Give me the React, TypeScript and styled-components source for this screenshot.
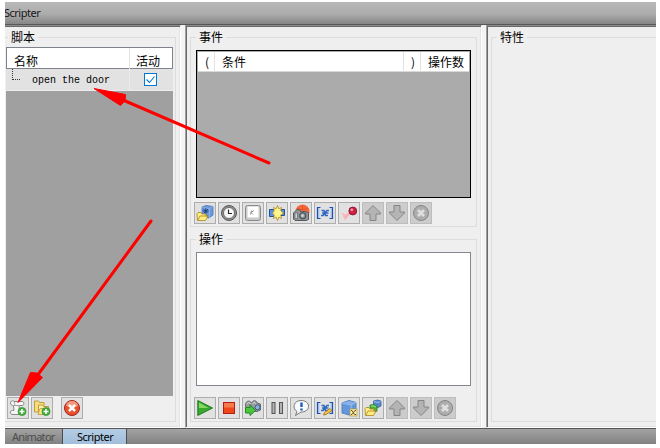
import React from "react";
import styled, { createGlobalStyle } from "styled-components";

const Global = createGlobalStyle`
  * { box-sizing: border-box; }
  body { margin: 0; background: #fff; }
`;

const Page = styled.div`
  position: relative;
  width: 660px;
  height: 448px;
  padding: 2px 4px 4px 5px;
  overflow: hidden;
  color: #000;
  font: 12px/14px "Noto Sans CJK SC", sans-serif;
`;

const Frame = styled.div`
  display: flex;
  flex-direction: column;
  width: 651px;
  height: 442px;
  overflow: hidden;
  background: #f0f0f0;
`;

const TitleBar = styled.header`
  flex: 0 0 23px;
  display: flex;
  align-items: center;
  border-bottom: 1px solid #595659;
  background: linear-gradient(#b9b9b9 0%, #acacac 55%, #a3a3a3 65%, #868686 100%);
  color: #151515;
  font: 11px/14px "Noto Sans", sans-serif;
  letter-spacing: -0.5px;
  text-indent: -1px;
`;

const Panes = styled.main`
  flex: 0 0 403px;
  display: grid;
  grid-template-columns: 176px 297px 170px;
  column-gap: 4px;
  background: #f4f4f4;
`;

const Pane = styled.section<{ $cutLeft?: boolean; $cutRight?: boolean }>`
  display: flex;
  flex-direction: column;
  gap: 12px;
  min-width: 0;
  padding: 11px ${(p) => (p.$cutRight ? 0 : 4)}px 4px ${(p) => (p.$cutLeft ? 0 : 4)}px;
  background: #efefef;
  border-top: 1px solid #8d8d8d;
  border-left: ${(p) => (p.$cutLeft ? "0" : "1px solid #a0a0a0")};
  border-right: ${(p) => (p.$cutRight ? "0" : "1px solid #fff")};
  border-bottom: 1px solid #fff;
  box-shadow: inset ${(p) => (p.$cutLeft ? 0 : 1)}px 1px #696969,
    inset ${(p) => (p.$cutRight ? 0 : -1)}px -1px #e3e3e3;
`;

const Group = styled.section<{ $height: number; $cutLeft?: boolean; $cutRight?: boolean }>`
  flex: 0 0 ${(p) => p.$height}px;
  border: 1px solid #dcdcdc;
  border-left-width: ${(p) => (p.$cutLeft ? 0 : 1)}px;
  border-right-width: ${(p) => (p.$cutRight ? 0 : 1)}px;
  padding-left: ${(p) => (p.$cutLeft ? 1 : 5)}px;
`;

const Legend = styled.h2<{ $indent?: number }>`
  width: max-content;
  height: 14px;
  margin: -8px 0 0 ${(p) => p.$indent ?? 0}px;
  padding: 0 3px;
  background: #efefef;
  font: inherit;
`;

const ScriptList = styled.div`
  width: 167px;
  height: 349px;
  margin-top: 3px;
  background: #a0a0a0;
`;

const ScriptHeader = styled.div`
  display: grid;
  grid-template-columns: 122px 1fr;
  height: 22px;
  border: 1px solid #7f838c;
  background: #fff;
  line-height: 26px;
  & > span { padding-left: 7px; }
  & > span + span { padding-left: 6px; border-left: 1px solid #e2e2e2; }
`;

const ScriptRow = styled.div`
  display: grid;
  grid-template-columns: 26px 97px 1fr;
  height: 22px;
  background: #e2e2e2;
  border-bottom: 1px solid #ececec;
`;

const TreeBranch = styled.span`
  width: 8px;
  height: 11px;
  margin-left: 6px;
  border-left: 1px dotted #333;
  border-bottom: 1px dotted #333;
`;

const ScriptName = styled.span`
  height: 21px;
  font: 10px/23px "Liberation Mono", monospace;
  white-space: pre;
`;

const CheckCell = styled.span`
  display: flex;
  align-items: center;
  padding-left: 14px;
  border-left: 1px solid #ececec;
`;

const CheckBox = styled.span`
  display: flex;
  width: 13px;
  height: 13px;
  border: 1px solid #0078d7;
  background: #fff;
`;

const EventList = styled.div`
  width: 275px;
  height: 148px;
  margin-top: 6px;
  padding: 1px;
  border: 1px solid #000;
  background: #ababab;
`;

const EventHeader = styled.div`
  display: grid;
  grid-template-columns: 16px 189px 17px 1fr;
  height: 20px;
  border-bottom: 1px solid #d8d8d8;
  background: #fff;
  line-height: 20px;
  & > span { padding-left: 7px; border-left: 1px solid #e2e2e2; white-space: nowrap; }
  & > span:first-child { border-left: 0; }
`;

const ActionBox = styled.div`
  width: 275px;
  height: 134px;
  margin-top: 6px;
  border: 1px solid #828790;
  background: #fff;
`;

const Toolbar = styled.div<{ $top: number; $left?: number }>`
  display: flex;
  gap: 2px;
  margin: ${(p) => p.$top}px 0 0 ${(p) => p.$left ?? -2}px;
`;

const ToolButton = styled.button<{ $off?: boolean; $apart?: boolean }>`
  display: flex;
  align-items: center;
  justify-content: center;
  width: 22px;
  height: 22px;
  margin: 0 0 0 ${(p) => (p.$apart ? 6 : 0)}px;
  padding: 0;
  border: 1px solid ${(p) => (p.$off ? "#bdbdbd" : "#adadad")};
  background: ${(p) => (p.$off ? "#cccccc" : "#e1e1e1")};
`;

const TabBar = styled.nav`
  flex: 0 0 16px;
  display: flex;
  border-top: 1px solid #555;
  background: linear-gradient(#a3a3a3, #828282);
  font: 11px/15px "Noto Sans", sans-serif;
`;

const Tab = styled.span<{ $active?: boolean; $width: number }>`
  width: ${(p) => p.$width}px;
  padding-left: ${(p) => (p.$active ? 14 : 7)}px;
  border-right: 1px solid #4c4c4c;
  color: ${(p) => (p.$active ? "#000" : "#4d4d4d")};
  letter-spacing: ${(p) => (p.$active ? -0.5 : -0.7)}px;
  background: ${(p) => (p.$active ? "linear-gradient(#b4cde4, #a1bedb)" : "transparent")};
`;

const Arrows = styled.svg`
  position: absolute;
  left: 0;
  top: 0;
  pointer-events: none;
`;

const Icon = ({ children }: { children: React.ReactNode }) => (
  <svg width="18" height="18" viewBox="0 0 18 18" fill="none">{children}</svg>
);

const Plus = () => (
  <>
    <circle cx="13" cy="12.500" r="4" fill="#42ad36" stroke="#3d8f3f" strokeWidth=".8" />
    <path d="M13 10v5M10.500 12.500h5" stroke="#fff" strokeWidth="1.500" />
  </>
);

const Folder = () => (
  <path d="M1 9.500l1-1h3l1 1.500h4v2h2l-2.500 4.500H1.500z M2 16l2-4h8" fill="#ffec80" stroke="#a78722" strokeWidth=".8" />
);

const Brackets = () => (
  <>
    <path d="M4.500 3.500h-3v11h3M13.500 3.500h3v11h-3" stroke="#1c51b2" strokeWidth="1.200" />
    <path d="M2.700 4v10M15.300 4v10" stroke="#9bbdf2" strokeWidth="1.200" />
    <path d="M5.500 6.500h2.500l1.500 5h2.500M13 6.500h-2l-4 5H5M6 9h6.500" stroke="#3067c2" strokeWidth="1.600" />
  </>
);

const icons = {
  script: (
    <>
      <path d="M1.500 4c0-2 2-3 3.500-1.500h8c2.500 0 2.500 4 0 4h-3l1 9H4c-3.500 0-3.500-4-.5-4H5L4.500 6.500C3 6.500 1.500 6 1.500 4z" fill="#f6f6f6" stroke="#868686" />
      <path d="M5 3c1 1 1 2.500 0 3.500h6" stroke="#a0a0a0" />
      <Plus />
    </>
  ),
  folders: (
    <>
      <path d="M1.500 2h4l1 1.500H11V13H1.500z" fill="#f6df7b" stroke="#bd9c40" />
      <path d="M5.500 6h4l1 1.500h5V15h-10z" fill="#fcf0a2" stroke="#bd9c40" />
      <path d="M5 15.500l2-6h9l-2 6z" fill="#fae68a" stroke="#bd9c40" strokeWidth=".8" />
      <Plus />
    </>
  ),
  remove: (
    <>
      <circle cx="9" cy="9" r="7.500" fill="#e9502d" stroke="#a02318" />
      <path d="M3 7a6 5 0 0 1 12 0c-3 1.500-8 1-12 0z" fill="#f4977c" />
      <path d="M6 6l6 6M12 6l-6 6" stroke="#fff" strokeWidth="2.500" />
    </>
  ),
  cubeFolder: (
    <>
      <path d="M6 3l4-1.500 7 1V11l-4 3-7-1.500z" fill="#6c98dc" stroke="#4873b8" strokeWidth=".8" />
      <path d="M6 3.500l7.500 1L17 2.500M13.500 4.500V14" stroke="#93b5e8" strokeWidth=".8" />
      <path d="M7.500 5l4 4M12 5L8 9M9.800 4v6M7 7h5.500" stroke="#18396d" strokeWidth=".8" />
      <Folder />
    </>
  ),
  clock: (
    <>
      <circle cx="9" cy="9" r="7.500" fill="#929292" stroke="#555" />
      <circle cx="9" cy="9" r="5.500" fill="#f7f7f7" stroke="#555" strokeWidth=".8" />
      <path d="M8.500 5.500v4H12" stroke="#222" strokeWidth="1.100" />
    </>
  ),
  key: (
    <>
      <rect x="1.500" y="1.500" width="15" height="15" rx="2" fill="#c9c9c9" stroke="#8b8b8b" />
      <rect x="3.500" y="2.500" width="11" height="11" rx="1" fill="#fff" stroke="#e3e3e3" />
      <path d="M7.500 6.500l-1 4M10 6.500L7 8.500l2 2" stroke="#888" strokeWidth=".9" />
    </>
  ),
  burst: (
    <>
      <path d="M1.500 5.500h6v7h-6zM12 5.500h4.500v6H12z" fill="#5c91df" stroke="#244e98" />
      <path d="M9.500 1.500l1.300 3.300L13.500 3.500l-.8 3.300L15.500 9l-2.800 2.200.8 3.300-2.700-1.300-1.300 3.300-1.300-3.300-2.700 1.300.8-3.300L4.500 9l1.800-2.200-.8-3.300 2.700 1.300z" fill="#fff58a" stroke="#a98b20" strokeWidth=".8" />
    </>
  ),
  cameraEvent: (
    <>
      <circle cx="10.500" cy="7.500" r="7" fill="#f4683c" />
      <path d="M5 4c3 2 8 2 11 0M10.500 1v5" stroke="#dc4e27" strokeWidth=".8" />
      <path d="M1.500 9L3 7.500 5 5.500l3 .5 1 2 3-.5 4.500 1v7L14 16.500H3L1.500 15z" fill="#92979a" stroke="#555a5e" />
      <path d="M3 9h2.500v5.500H3z" fill="#d2d5d6" stroke="#62676a" strokeWidth=".7" />
      <circle cx="10.800" cy="11.800" r="3.200" fill="#83898d" stroke="#444b50" />
      <circle cx="10.500" cy="11.500" r="1.500" fill="#c9d0d4" />
    </>
  ),
  variable: <Brackets />,
  pin: (
    <>
      <path d="M1.500 8.500l4 2L10 8l-5 8.500z" fill="#ffb5bd" />
      <path d="M5 14l5-5.500" stroke="#f5b0b8" strokeWidth="2.500" />
      <circle cx="12.800" cy="7" r="3.900" fill="#cf2346" stroke="#8e1932" />
      <circle cx="11.800" cy="5.700" r="1.300" fill="#f6a4b2" />
    </>
  ),
  up: <path d="M9 1.500L16.500 9v1H12v6.500H6V10H1.500V9z" fill="#b4b4b4" stroke="#858585" />,
  down: <path d="M9 16.500L1.500 9V8H6V1.500h6V8h4.500v1z" fill="#b4b4b4" stroke="#858585" />,
  cancel: (
    <>
      <circle cx="9" cy="9" r="7.500" fill="#adadad" stroke="#858585" />
      <path d="M6 6l6 6M12 6l-6 6" stroke="#dfdfdf" strokeWidth="2.800" />
    </>
  ),
  play: (
    <>
      <path d="M1.800 1.500L16.500 9 1.800 16.500z" fill="#38a92a" stroke="#217a28" />
      <path d="M3 3.500L12.500 9H3z" fill="#89d764" />
    </>
  ),
  stop: (
    <>
      <rect x="3.500" y="3.500" width="11" height="11" fill="#ef4718" stroke="#ae2016" />
      <path d="M4 4h10v4.500H4z" fill="#f77b4b" />
    </>
  ),
  cameraPlay: (
    <>
      <path d="M1.500 7C1 2 5.500.5 7.500 4 9 .8 12.500 1 13 4l3.500 1v6l-3.500 1.500H4z" fill="#9a9da1" stroke="#656a70" />
      <path d="M3 5c1-2 2.500-2 3.500 0M9 4.500c.8-1.500 2-1.300 2.500 0" stroke="#e4e7e9" />
      <circle cx="13.500" cy="8.300" r="2.500" fill="#88aee3" stroke="#445b7b" />
      <path d="M1.500 8.500h4.500V5.500l5.500 6-5.500 5v-2.500H1.500z" fill="#4bc53b" stroke="#278526" />
    </>
  ),
  pause: (
    <>
      <rect x="4" y="3.500" width="3" height="11" fill="#b4b4b4" stroke="#555" />
      <rect x="11.500" y="3.500" width="3" height="11" fill="#b4b4b4" stroke="#555" />
    </>
  ),
  message: (
    <>
      <path d="M9 1.500c4 0 7.500 2 7.500 5.800S13 13 9 13L3.500 16.500 5 12.500C-.5 9 2 1.500 9 1.500z" fill="#fafafa" stroke="#777" />
      <path d="M9.500 3.500v4.500M9.500 9.500v2" stroke="#1b5bc2" strokeWidth="2.400" />
    </>
  ),
  editVariable: (
    <>
      <Brackets />
      <path d="M7.500 16l1-2.500 5.500-4 2 2-6 4z" fill="#f7c447" stroke="#a47524" strokeWidth=".9" />
    </>
  ),
  cubeTag: (
    <>
      <path d="M2 4l7-2.500 7 2V13L11 16.500 2 14z" fill="#6496dc" stroke="#5584c4" />
      <path d="M2 4l9 2 5-2.500M11 6v10" stroke="#a0c1ee" />
      <path d="M2.500 4L9 2l6.500 1.700L11 5.600z" fill="#88b0e7" />
      <rect x="10" y="10" width="7" height="7" fill="#ffed9e" stroke="#ae963f" strokeWidth=".7" />
      <path d="M11 11.500h1l2.500 4H16M16 11.500h-1l-3 4h-1" stroke="#5d512c" />
    </>
  ),
  cubesFolder: (
    <>
      <path d="M9.500 2l4-1 3.500 1v5l-3 1.500-4.500-1z" fill="#5488ce" stroke="#3764a0" strokeWidth=".8" />
      <path d="M10 2.500l4 1 2.500-1" stroke="#a0c1ee" />
      <path d="M6 6l4-.5 3 1.500v5L10 13.500H6z" fill="#4fae3b" stroke="#2b8129" strokeWidth=".8" />
      <path d="M7 7h3l2 1" stroke="#a3e18a" />
      <Folder />
    </>
  ),
};

type IconName = keyof typeof icons;

const Tools = ({ names, top, left }: { names: IconName[]; top: number; left?: number }) => (
  <Toolbar $top={top} $left={left}>
    {names.map((name) => (
      <ToolButton key={name} aria-label={name} $off={["up", "down", "cancel"].includes(name)} $apart={name === "remove"}>
        <Icon>{icons[name]}</Icon>
      </ToolButton>
    ))}
  </Toolbar>
);

export default function App() {
  return (
    <Page>
      <Global />
      <Frame>
        <TitleBar>Scripter</TitleBar>
        <Panes>
          <Pane $cutLeft>
            <Group $height={385} $cutLeft>
              <Legend $indent={2}>脚本</Legend>
              <ScriptList>
                <ScriptHeader><span>名称</span><span>活动</span></ScriptHeader>
                <ScriptRow>
                  <TreeBranch />
                  <ScriptName>open the door</ScriptName>
                  <CheckCell>
                    <CheckBox>
                      <svg width="11" height="11"><path d="M1.500 5.500l3 3 5-6" fill="none" stroke="#0078d7" strokeWidth="1.100" /></svg>
                    </CheckBox>
                  </CheckCell>
                </ScriptRow>
              </ScriptList>
              <Tools names={["script", "folders", "remove"]} top={1} left={1} />
            </Group>
          </Pane>
          <Pane>
            <Group $height={190}>
              <Legend>事件</Legend>
              <EventList>
                <EventHeader><span>(</span><span>条件</span><span>)</span><span>操作数</span></EventHeader>
              </EventList>
              <Tools names={["cubeFolder", "clock", "key", "burst", "cameraEvent", "variable", "pin", "up", "down", "cancel"]} top={4} />
            </Group>
            <Group $height={183}>
              <Legend>操作</Legend>
              <ActionBox />
              <Tools names={["play", "stop", "cameraPlay", "pause", "message", "editVariable", "cubeTag", "cubesFolder", "up", "down", "cancel"]} top={11} />
            </Group>
          </Pane>
          <Pane $cutRight>
            <Group $height={385} $cutRight>
              <Legend>特性</Legend>
            </Group>
          </Pane>
        </Panes>
        <TabBar>
          <Tab $width={58}>Animator</Tab>
          <Tab $active $width={64}>Scripter</Tab>
        </TabBar>
      </Frame>
      <Arrows width="660" height="448" fill="#f00" stroke="#f00">
        <path d="M269 163L123 100M151 221L37 376" strokeWidth="3" strokeLinecap="round" />
        <path d="M94 88.500L125.500 94.500 125 101 120.500 105.500zM18 402.500L30.500 372.500 37 373 42.500 377.500z" strokeWidth="1" />
      </Arrows>
    </Page>
  );
}
